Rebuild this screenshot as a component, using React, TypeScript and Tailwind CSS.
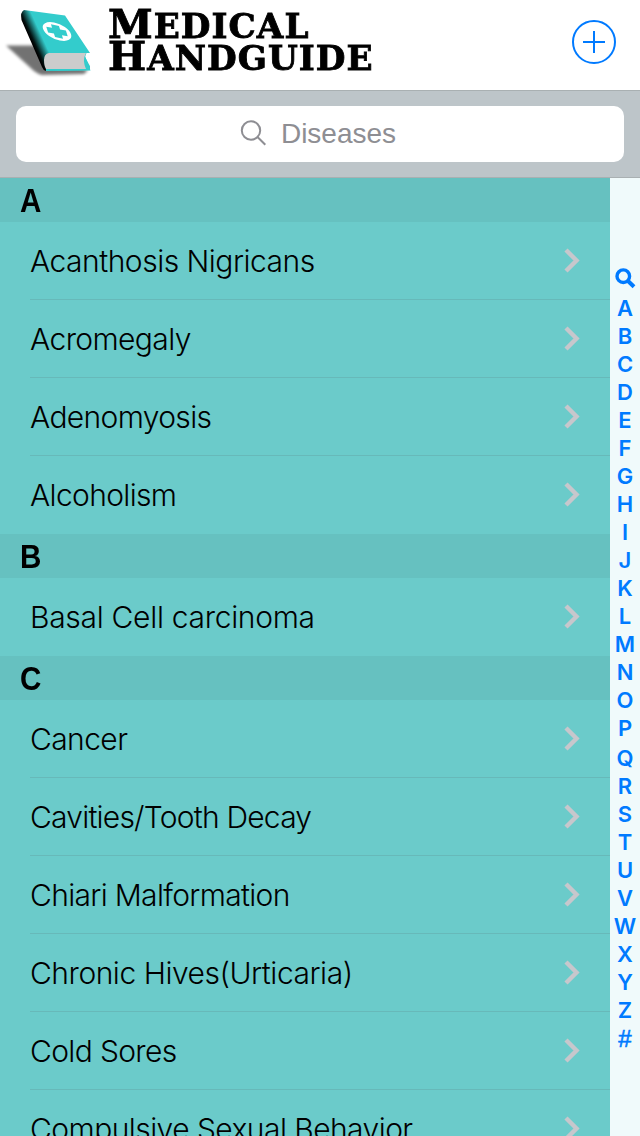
import React from "react";

interface Row {
  name: string;
  tracking: string;
}

interface Section {
  letter: string;
  rows: Row[];
}

const sections: Section[] = [
  {
    letter: "A",
    rows: [
      { name: "Acanthosis Nigricans", tracking: "tracking-[-0.5px]" },
      { name: "Acromegaly", tracking: "tracking-[-0.6px]" },
      { name: "Adenomyosis", tracking: "tracking-[-0.65px]" },
      { name: "Alcoholism", tracking: "tracking-[-0.65px]" },
    ],
  },
  {
    letter: "B",
    rows: [{ name: "Basal Cell carcinoma", tracking: "tracking-[-0.3px]" }],
  },
  {
    letter: "C",
    rows: [
      { name: "Cancer", tracking: "tracking-[-0.6px]" },
      { name: "Cavities/Tooth Decay", tracking: "tracking-[-0.78px]" },
      { name: "Chiari Malformation", tracking: "tracking-[-0.68px]" },
      { name: "Chronic Hives(Urticaria)", tracking: "tracking-[-0.47px]" },
      { name: "Cold Sores", tracking: "tracking-[-0.65px]" },
      { name: "Compulsive Sexual Behavior", tracking: "tracking-[-0.55px]" },
    ],
  },
];

const indexTop = "ABCDEFGHIJKLMNOP".split("");
const indexBottom = "QRSTUVWXYZ".split("");

function BookLogo() {
  return (
    <svg width="100" height="90" viewBox="0 0 100 90" className="shrink-0">
      <defs>
        <linearGradient id="spine" gradientUnits="userSpaceOnUse" x1="30" y1="38" x2="40.5" y2="33.2">
          <stop offset="0" stopColor="#000" />
          <stop offset="0.2" stopColor="#031413" />
          <stop offset="1" stopColor="#33cccc" />
        </linearGradient>
        <filter id="soft" x="-20%" y="-20%" width="140%" height="140%">
          <feGaussianBlur stdDeviation="1.8" />
        </filter>
      </defs>
      <path d="M6 45.5 L34 45.5 L60 64 L88 70 L84 74 L42 75 Q38 74 34 71 Z" fill="#000" opacity="0.55" filter="url(#soft)" />
      <path d="M24 10 L65 15.5 L90 53 L90 70 L46 71 Q43 70 42 67 L21.5 20 Q20 12 24 10 Z" fill="url(#spine)" />
      <path d="M91 53 L86.5 53 L85 57 L91 68 Z" fill="#fff" />
      <path d="M85 56 L90.5 70.5 L46 71 L46 69 L84 69 Z" fill="#33cccc" />
      <path d="M49 53 H86 Q82 60 86 69 H46 Q44 66 44 60 Q44 54 49 53 Z" fill="#ccc" />
      <g transform="matrix(1 0.2 0.32 1 57 31.5)">
        <ellipse rx="14" ry="9" fill="#fff" />
        <path d="M-4 -6.4 H4 V-2.9 H9.8 V2.9 H4 V6.4 H-4 V2.9 H-9.8 V-2.9 H-4 Z" fill="#33cccc" />
      </g>
    </svg>
  );
}

function Chevron() {
  return (
    <svg width="18" height="26" viewBox="0 0 18 26" fill="none" className="shrink-0">
      <path d="M3 2 L13.5 12.5 L3 23" stroke="#c7c7cc" strokeWidth="4.4" />
    </svg>
  );
}

export default function App() {
  return (
    <div className="flex h-[1136px] w-[640px] flex-col overflow-hidden bg-white font-['Liberation_Sans',sans-serif] text-black">
      {/* Title bar */}
      <header className="flex h-[91px] shrink-0 items-start border-b border-[#a9b0b2] bg-white">
        <BookLogo />
        <h1 className="ml-2 flex origin-left scale-x-[1.036] flex-col pt-[8px] font-['DejaVu_Serif',serif] text-[33px] leading-[32px] font-bold whitespace-nowrap [-webkit-text-stroke:0.8px_black]">
          <span className="h-8 tracking-[1px]">
            <span className="text-[39px]">M</span>EDICAL
          </span>
          <span className="h-8 tracking-[1px]">
            <span className="text-[39px]">H</span>ANDGUIDE
          </span>
        </h1>
        <button className="mt-5 mr-6 ml-auto">
          <svg width="44" height="44" viewBox="0 0 44 44" fill="none" stroke="#007aff" strokeWidth="2">
            <circle cx="22" cy="22" r="21" />
            <path d="M11 22 H33 M22 11 V33" />
          </svg>
        </button>
      </header>

      {/* Search */}
      <div className="h-[87px] shrink-0 border-b border-[#a9b0b2] bg-[#bdc5c9] px-4 pt-[15px]">
        <div className="flex h-14 items-center justify-center rounded-[10px] bg-white pr-[3px] text-[#8e8e93]">
          <svg width="28" height="28" viewBox="2 1.5 28 28" fill="none" stroke="#8e8e93" strokeWidth="2" className="overflow-visible">
            <circle cx="12" cy="12" r="9.2" />
            <path d="M18.5 18.5 L26.3 26.3" />
          </svg>
          <span className="ml-3 text-[28px] leading-8">Diseases</span>
        </div>
      </div>

      <div className="flex min-h-0 flex-1">
        {/* Disease list */}
        <main className="w-[610px] overflow-hidden bg-[#6bcbca]">
          {sections.map((section) => (
            <section key={section.letter}>
              <h2 className="flex h-11 items-center bg-[#66c1c0] pl-5 text-[34px] font-bold">
                <span className="inline-block origin-left scale-x-[0.87]">{section.letter}</span>
              </h2>
              <ul className="pl-[30px]">
                {section.rows.map((row) => (
                  <li
                    key={row.name}
                    className="flex h-[78px] items-center justify-between border-b border-[#67b9b9] pr-[29px] font-['Inter',sans-serif] text-[30px] font-light last:border-b-transparent"
                  >
                    <span className={`pt-0.5 ${row.tracking}`}>{row.name}</span>
                    <Chevron />
                  </li>
                ))}
              </ul>
            </section>
          ))}
        </main>

        {/* Section index */}
        <nav className="flex w-[30px] flex-col items-center bg-[#f0fafb] pt-[89px] font-['Inter',sans-serif] text-[22px] leading-7 font-semibold text-[#007aff]">
          <svg width="22" height="22" viewBox="0 0 22 22" fill="none" stroke="#007aff" className="mb-[5px] shrink-0">
            <circle cx="9.3" cy="9.2" r="6.3" strokeWidth="3.4" />
            <path d="M13.5 13.5 L20 19.8" strokeWidth="4" />
          </svg>
          {indexTop.map((letter) => (
            <span key={letter} className="h-7">
              {letter}
            </span>
          ))}
          <div className="mt-0.5 flex flex-col items-center">
            {indexBottom.map((letter) => (
              <span key={letter} className="h-7">
                {letter}
              </span>
            ))}
            <span className="h-7 pt-px font-['Liberation_Sans',sans-serif] text-[24px] font-normal [-webkit-text-stroke:0.6px_#007aff]">#</span>
          </div>
        </nav>
      </div>
    </div>
  );
}
